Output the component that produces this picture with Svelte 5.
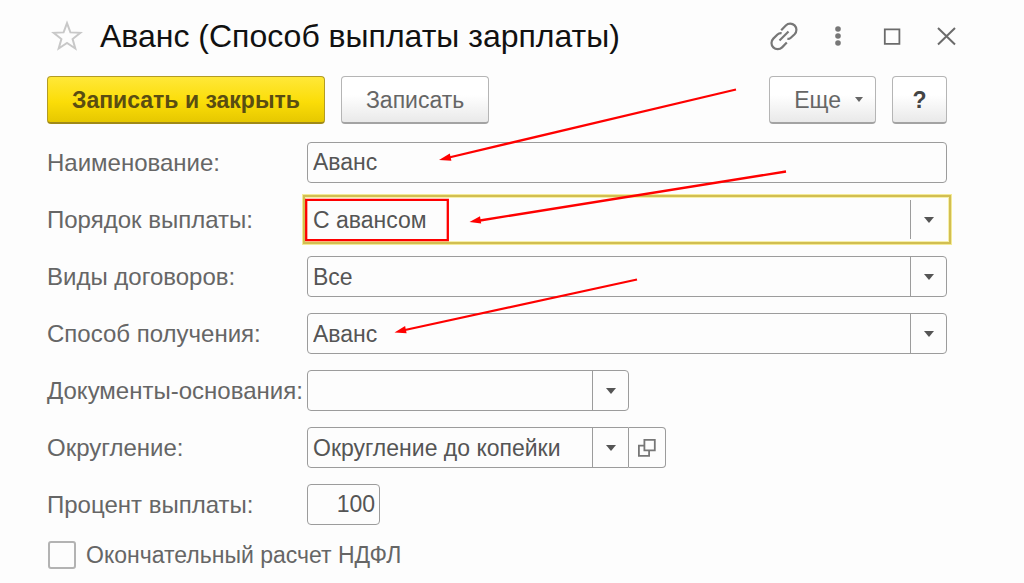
<script lang="ts">
	// Значения формы
	let name = $state('Аванс');
	let order = $state('С авансом');
	let contracts = $state('Все');
	let method = $state('Аванс');
	let documents = $state('');
	let rounding = $state('Округление до копейки');
	let percent = $state('100');
	let finalTax = $state(false);
</script>

{#snippet arrow()}
	<span class="combo-arrow" aria-hidden="true">
		<svg width="10" height="6" viewBox="0 0 10 6"><path d="M0 0h10L5 6z" fill="#555" /></svg>
	</span>
{/snippet}

<main class="window">
	<header class="title-bar">
		<button type="button" class="icon-btn star" aria-label="Добавить в избранное">
			<svg width="32" height="32" viewBox="0 0 32 32" fill="none" stroke="#c8c8c8" stroke-width="2">
				<path d="M16 3.2l3.4 9.200 10 .4-7.800 6.200 2.700 9.500-8.300-5.500-8.300 5.500 2.700-9.500-7.800-6.200 10-.4z" />
			</svg>
		</button>
		<h1>Аванс (Способ выплаты зарплаты)</h1>
		<div class="window-tools">
			<button type="button" class="icon-btn" aria-label="Получить ссылку">
				<svg width="30" height="30" viewBox="0 0 30 30" fill="none" stroke="#777" stroke-width="2.2">
					<path d="M12.2 9.200l4.600-4.800a6.200 6.200 0 0 1 8.800 8.800l-3.800 3.500c-1 .9-2 1.300-3.400 1.200" />
					<path d="M12.600 12.100c-1.600-.2-3 .3-4.100 1.400l-4.200 4.100a6.200 6.200 0 0 0 8.800 8.800l4.700-4.800" />
					<path d="M10.500 19.500l9-9" />
				</svg>
			</button>
			<button type="button" class="icon-btn" aria-label="Меню">
				<svg width="30" height="30" viewBox="0 0 30 30" fill="#777">
					<circle cx="15" cy="8" r="2.8" />
					<circle cx="15" cy="15" r="2.8" />
					<circle cx="15" cy="22" r="2.8" />
				</svg>
			</button>
			<button type="button" class="icon-btn" aria-label="Развернуть">
				<svg width="30" height="30" viewBox="0 0 30 30" fill="none" stroke="#6b6b6b" stroke-width="1.8">
					<path d="M7.800 8.400h14.600v14.400H7.800z" />
				</svg>
			</button>
			<button type="button" class="icon-btn" aria-label="Закрыть">
				<svg width="30" height="30" viewBox="0 0 30 30" fill="none" stroke="#6b6b6b" stroke-width="2">
					<path d="M7 7l17 16.500M24 7L7 23.500" />
				</svg>
			</button>
		</div>
	</header>

	<div class="commands">
		<button type="submit" form="pay-form" class="btn primary">Записать и закрыть</button>
		<button type="button" class="btn">Записать</button>
		<span class="spacer"></span>
		<button type="button" class="btn more">
			Еще
			<svg width="8" height="5" viewBox="0 0 8 5"><path d="M0 0h8L4 5z" fill="#666" /></svg>
		</button>
		<button type="button" class="btn help" aria-label="Справка">?</button>
	</div>

	<form id="pay-form" onsubmit={(event) => event.preventDefault()}>
		<div class="row">
			<label for="name">Наименование:</label>
			<input id="name" class="field" type="text" bind:value={name} />
		</div>
		<div class="row">
			<label for="order">Порядок выплаты:</label>
			<div class="combo active">
				<select id="order" class="field" bind:value={order}>
					<option>С авансом</option>
				</select>
				{@render arrow()}
			</div>
		</div>
		<div class="row">
			<label for="contracts">Виды договоров:</label>
			<div class="combo">
				<select id="contracts" class="field" bind:value={contracts}>
					<option>Все</option>
				</select>
				{@render arrow()}
			</div>
		</div>
		<div class="row">
			<label for="method">Способ получения:</label>
			<div class="combo">
				<select id="method" class="field" bind:value={method}>
					<option>Аванс</option>
				</select>
				{@render arrow()}
			</div>
		</div>
		<div class="row">
			<label for="documents">Документы-основания:</label>
			<div class="combo short">
				<select id="documents" class="field" bind:value={documents}>
					<option value=""></option>
				</select>
				{@render arrow()}
			</div>
		</div>
		<div class="row">
			<label for="rounding">Округление:</label>
			<div class="group">
				<div class="combo short">
					<select id="rounding" class="field" bind:value={rounding}>
						<option>Округление до копейки</option>
					</select>
					{@render arrow()}
				</div>
				<button type="button" class="open-btn" aria-label="Открыть">
					<svg width="20" height="20" viewBox="0 0 20 20" fill="none" stroke="#777" stroke-width="1.8">
						<path d="M7.400 1.900h10.400v10.400H7.400z" />
						<path d="M7 7.700H1.900v10.200h10.200v-5" />
					</svg>
				</button>
			</div>
		</div>
		<div class="row">
			<label for="percent">Процент выплаты:</label>
			<input id="percent" class="field percent" type="text" inputmode="numeric" bind:value={percent} />
		</div>
		<label class="check">
			<input type="checkbox" bind:checked={finalTax} />
			Окончательный расчет НДФЛ
		</label>
	</form>

	<!-- Красные пометки поверх формы -->
	<svg class="marks" width="800" height="350" viewBox="0 0 800 350" aria-hidden="true">
		<g fill="none" stroke="#fe0000" stroke-width="2.3">
			<path d="M736 89.500L449 157.500" />
			<path d="M786 171.500L480 220.500" />
			<path d="M637 279.500L405 330" />
			<path d="M306.200 199.800h141.600v40.400H306.200z" />
		</g>
		<g fill="#fe0000">
			<path d="M439 160l10.800-6.500 1.600 7.200z" />
			<path d="M469.500 222l10.500-5.800 1.200 7.200z" />
			<path d="M394.500 332.500l10.600-6.500 1.500 7.200z" />
		</g>
	</svg>
</main>

<style>
	:global(body) {
		margin: 0;
		background: #fdfdfd;
	}

	.window {
		position: relative;
		padding: 11px 77px 12px 47px;
		font-family: 'Liberation Sans', Arial, sans-serif;
		font-size: 23px;
		line-height: 28px;
		color: #666;
	}

	button,
	input,
	select {
		box-sizing: border-box;
		margin: 0;
		font: inherit;
		color: inherit;
	}

	svg {
		display: block;
	}

	/* Заголовок */
	.title-bar {
		display: flex;
		align-items: center;
		height: 50px;
	}

	h1 {
		margin: 0 0 0 17px;
		font-size: 32px;
		line-height: 40px;
		font-weight: 400;
		white-space: nowrap;
		color: #111;
	}

	.icon-btn {
		padding: 0;
		border: 0;
		background: none;
	}

	.star {
		margin-left: 4px;
	}

	.window-tools {
		display: flex;
		gap: 24px;
		margin-left: auto;
		margin-right: -14px;
	}

	/* Командная панель */
	.commands {
		display: flex;
		gap: 16px;
		margin-top: 15px;
	}

	.spacer {
		flex: 1;
	}

	.btn {
		height: 48px;
		padding: 0 24px;
		border: 1px solid #b5b5b5;
		border-bottom: 2px solid #a3a3a3;
		border-radius: 4px;
		background: linear-gradient(#fff 40%, #e9e9e9);
		white-space: nowrap;
	}

	.primary {
		border-color: #b39c24;
		border-bottom-color: #a08a18;
		background: linear-gradient(#ffe838, #fbdd08 55%, #e6c800);
		font-weight: 700;
		color: #594d12;
	}

	.more {
		display: flex;
		align-items: center;
		gap: 14px;
		padding-right: 12px;
	}

	.help {
		width: 55px;
		padding: 0;
		font-weight: 700;
		color: #444;
	}

	/* Поля */
	form {
		display: grid;
		gap: 16px;
		margin-top: 18px;
	}

	.row {
		display: grid;
		grid-template-columns: 260px 1fr;
		align-items: center;
	}

	.row label {
		font-size: 24px;
		white-space: nowrap;
	}

	.field {
		display: block;
		width: 100%;
		height: 41px;
		padding: 0 5px;
		border: 1px solid #9c9c9c;
		border-radius: 4px;
		outline: none;
		background: #fdfdfd;
		color: #555;
		appearance: none;
	}

	.percent {
		width: 73px;
		padding-right: 4px;
		text-align: right;
	}

	.combo {
		position: relative;
	}

	.short {
		width: 322px;
	}

	.combo-arrow {
		position: absolute;
		top: 1px;
		right: 1px;
		bottom: 1px;
		width: 35px;
		display: grid;
		place-items: center;
		border-left: 1px solid #9c9c9c;
		pointer-events: none;
	}

	.active .field {
		border-color: transparent;
		border-radius: 0;
		box-shadow:
			0 0 0 1px #fdfdfd,
			0 0 0 2px #f6f0a8,
			0 0 0 4px #d2be52,
			0 0 0 5px #f3ea96;
	}

	.group {
		display: flex;
	}

	.group .field {
		border-radius: 4px 0 0 4px;
	}

	.open-btn {
		display: grid;
		place-items: center;
		width: 37px;
		height: 41px;
		padding: 0;
		border: 1px solid #9c9c9c;
		border-left: 0;
		border-radius: 0 4px 4px 0;
		background: #fdfdfd;
	}

	.check {
		display: flex;
		align-items: center;
		gap: 10px;
		margin-left: 1px;
	}

	.check input {
		width: 28px;
		height: 28px;
		border: 2px solid #b3b3b3;
		border-radius: 3px;
		background: #fdfdfd;
		appearance: none;
	}

	.check input:checked {
		background: #fbdd08;
	}

	/* Пометки */
	.marks {
		position: absolute;
		top: 0;
		left: 0;
		pointer-events: none;
	}
</style>
